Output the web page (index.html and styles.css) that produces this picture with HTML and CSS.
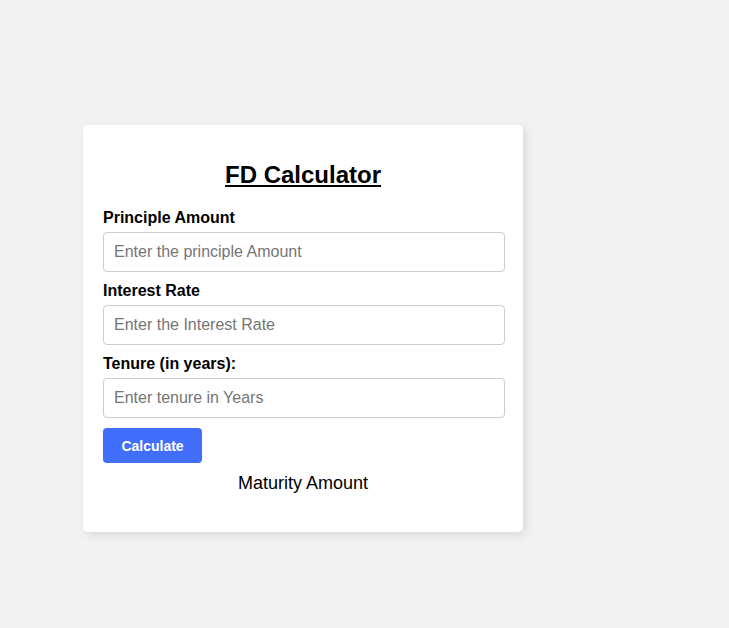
FILE: index.html
```html
<!DOCTYPE html>
<html>
<head>
<meta charset="utf-8">
<title>FD Calculator</title>
<link rel="stylesheet" href="styles.css">
</head>
<body>
<div class="card">
  <h2 class="title">FD Calculator</h2>
  <label class="label" for="p">Principle Amount</label>
  <input class="field" id="p" type="text" placeholder="Enter the principle Amount">
  <label class="label" for="r">Interest Rate</label>
  <input class="field" id="r" type="text" placeholder="Enter the Interest Rate">
  <label class="label" for="t">Tenure (in years):</label>
  <input class="field" id="t" type="text" placeholder="Enter tenure in Years">
  <button class="btn" type="button">Calculate</button>
  <div class="result">Maturity Amount</div>
</div>
</body>
</html>
```
FILE: styles.css
```css
html, body {
  margin: 0;
  background: #f2f2f2;
  font-family: "Liberation Sans", Arial, sans-serif;
}
body {
  padding: 125px 0 0 83px;
  height: 628px;
  box-sizing: border-box;
}
.card {
  width: 440px;
  box-sizing: border-box;
  background: #fff;
  border-radius: 5px;
  padding: 20px 20px 38px;
  box-shadow: 3px 3px 10px rgba(0, 0, 0, 0.1);
  display: flex;
  flex-direction: column;
  align-items: stretch;
}
.title {
  margin: 16px 0 20px;
  font-size: 24px;
  font-weight: bold;
  text-align: center;
  text-decoration: underline;
  color: #000;
}
.label {
  display: block;
  font-size: 16px;
  font-weight: bold;
  line-height: 18px;
  margin-bottom: 5px;
  color: #000;
}
.field {
  align-self: flex-start;
  width: 402px;
  height: 40px;
  box-sizing: border-box;
  border: 1px solid #ccc;
  border-radius: 4px;
  padding: 0 10px;
  font-size: 16px;
  font-family: "Liberation Sans", Arial, sans-serif;
  margin: 0 0 10px;
  outline: none;
}
.field::placeholder {
  color: #757575;
}
.btn {
  align-self: flex-start;
  width: 99px;
  height: 35px;
  background: #416ffc;
  color: #fff;
  border: none;
  border-radius: 4px;
  font-family: "Liberation Sans", Arial, sans-serif;
  font-size: 14px;
  font-weight: bold;
  padding: 0;
}
.result {
  margin-top: 10px;
  text-align: center;
  font-size: 18px;
  color: #000;
}
```
